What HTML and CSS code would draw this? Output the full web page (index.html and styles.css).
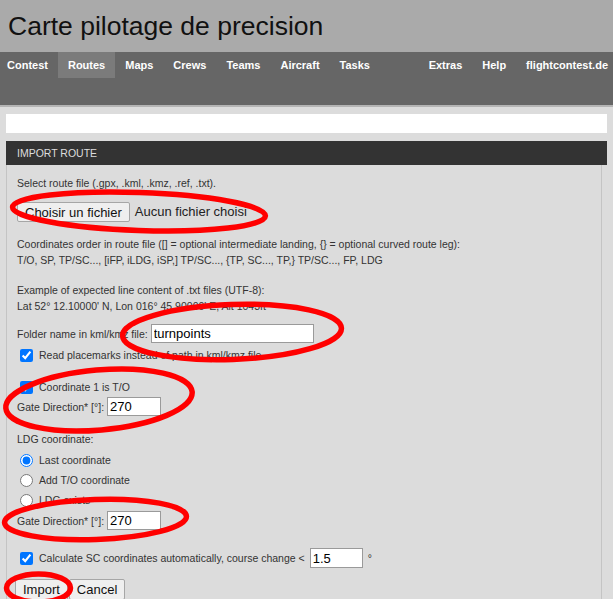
FILE: index.html
```html
<!DOCTYPE html>
<html lang="fr">
<head>
    <meta charset="UTF-8">
    <meta name="viewport" content="width=device-width, initial-scale=1.0">
    <title>Carte pilotage de precision</title>
    <link rel="stylesheet" href="styles.css">
</head>
<body>
    <header class="title">Carte pilotage de precision</header>

    <nav class="menu">
        <a href="#">Contest</a>
        <a href="#" class="active">Routes</a>
        <a href="#">Maps</a>
        <a href="#">Crews</a>
        <a href="#">Teams</a>
        <a href="#">Aircraft</a>
        <a href="#">Tasks</a>
        <a href="#" class="push">Extras</a>
        <a href="#">Help</a>
        <a href="#" class="last">flightcontest.de</a>
    </nav>

    <main class="content">
        <div class="message"></div>

        <form class="box">
            <div class="box-head">IMPORT ROUTE</div>
            <div class="box-body">
                <p class="text">Select route file (.gpx, .kml, .kmz, .ref, .txt).</p>
                <div class="file-row">
                    <button type="button" class="btn file-btn">Choisir un fichier</button>
                    <span class="file-name">Aucun fichier choisi</span>
                </div>

                <p class="text gap">Coordinates order in route file ([] = optional intermediate landing, {} = optional curved route leg):<br>T/O, SP, TP/SC..., [iFP, iLDG, iSP,] TP/SC..., {TP, SC..., TP,} TP/SC..., FP, LDG</p>
                <p class="text gap">Example of expected line content of .txt files (UTF-8):<br>Lat 52° 12.10000' N, Lon 016° 45.90000' E, Alt 1043ft</p>

                <div class="field folder">
                    <label>Folder name in kml/kmz file:</label>
                    <input type="text" class="input wide" value="turnpoints">
                </div>
                <label class="check placemarks"><input type="checkbox" checked>Read placemarks instead of path in kml/kmz file</label>

                <label class="check first-coord"><input type="checkbox" checked>Coordinate 1 is T/O</label>
                <div class="field gate">
                    <label>Gate Direction* [°]:</label>
                    <input type="text" class="input short" value="270">
                </div>

                <p class="text ldg">LDG coordinate:</p>
                <label class="check radio first-radio"><input type="radio" name="ldg" checked>Last coordinate</label>
                <label class="check radio"><input type="radio" name="ldg">Add T/O coordinate</label>
                <label class="check radio"><input type="radio" name="ldg">LDG exists</label>
                <div class="field gate-ldg">
                    <label>Gate Direction* [°]:</label>
                    <input type="text" class="input short" value="270">
                </div>

                <div class="check calc">
                    <input type="checkbox" checked>
                    <span>Calculate SC coordinates automatically, course change &lt;</span>
                    <input type="text" class="input short" value="1.5">
                    <span class="deg">°</span>
                </div>

                <div class="buttons">
                    <button type="button" class="btn">Import</button>
                    <button type="button" class="btn">Cancel</button>
                </div>
            </div>
        </form>
    </main>

    <!-- red hand-drawn marks over the screenshot -->
    <svg class="marks" width="613" height="599" viewBox="0 0 613 599">
        <ellipse cx="139" cy="211.5" rx="126.5" ry="19" transform="rotate(2 139 211.5)"/>
        <ellipse cx="232" cy="332" rx="109.5" ry="27.5" transform="rotate(-2 232 332)"/>
        <ellipse cx="99" cy="400" rx="93.5" ry="30" transform="rotate(-5 99 400)"/>
        <ellipse cx="95.5" cy="519.5" rx="91" ry="20" transform="rotate(-2 95.5 519.5)"/>
        <ellipse cx="38.5" cy="588" rx="32" ry="14"/>
    </svg>
</body>
</html>
```

FILE: styles.css
```css
/* Global Styles */
body {
    font-family: 'Liberation Sans', Arial, sans-serif;
    margin: 0;
    padding: 0;
    background: #dcdcdc;
    color: #333;
    position: relative;
    overflow: hidden;
}

.title {
    height: 52px;
    padding-left: 8px;
    background: #aaa;
    color: #111;
    font-size: 26.5px;
    line-height: 52px;
}

.menu {
    display: flex;
    align-items: flex-start;
    height: 53px;
    background: #666;
    border-bottom: 2px solid #b4b4b4;
}

.menu a {
    padding: 0 10px;
    color: #fff;
    font-size: 11px;
    font-weight: bold;
    line-height: 26px;
    text-decoration: none;
}

.menu a:first-child {
    padding-left: 7px;
}

.menu a.active {
    background: #7b7b7b;
}

.menu a.push {
    margin-left: auto;
}

.menu a.last {
    padding-right: 5px;
}

.content {
    padding: 7px 6px 0;
}

.message {
    height: 19px;
    background: #fff;
}

.box {
    margin: 8px 0 0;
}

.box-head {
    height: 24px;
    padding-left: 11px;
    background: #333;
    color: #ddd;
    font-size: 10.5px;
    line-height: 24px;
}

.box-body {
    padding: 10px 10px 20px;
    border-left: 1px solid #c4c4c4;
    border-right: 1px solid #c4c4c4;
    margin-right: 5px;
    font-size: 10.5px;
    line-height: 16px;
}

.text {
    margin: 0;
}

.text.gap {
    margin-top: 14px;
}

.text.ldg {
    margin-top: 15px;
}

.btn {
    height: 21px;
    padding: 0 7px;
    border: 1px solid #a6a6a6;
    border-radius: 2px;
    background: #efefef;
    color: #111;
    font-family: 'Liberation Sans', Arial, sans-serif;
    font-size: 13px;
}

.file-row {
    display: flex;
    align-items: center;
    gap: 5px;
    height: 20px;
    margin-top: 11px;
}

.file-btn {
    height: 20px;
    padding: 0 7px;
}

.file-name {
    color: #222;
    font-size: 13px;
}

.field {
    display: flex;
    align-items: center;
    gap: 3px;
    height: 19px;
}

.field.folder {
    margin-top: 10px;
}

.field.gate {
    margin-top: 2px;
}

.field.gate-ldg {
    margin-top: 3px;
}

.input {
    box-sizing: border-box;
    height: 19px;
    padding: 0 2px;
    border: 1px solid #9a9a9a;
    background: #fff;
    color: #000;
    font-family: 'Liberation Sans', Arial, sans-serif;
    font-size: 13px;
}

.input.wide {
    width: 163px;
}

.input.short {
    width: 54px;
}

.check {
    display: flex;
    align-items: center;
    height: 16px;
}

.check input[type="checkbox"],
.check input[type="radio"] {
    width: 13px;
    height: 13px;
    margin: 0 6px 0 3px;
}

.check.placemarks {
    margin-top: 4px;
}

.check.first-coord {
    margin-top: 16px;
}

.check.radio {
    margin-top: 4px;
}

.check.first-radio {
    margin-top: 5px;
}

.check.calc {
    height: 20px;
    margin-top: 18px;
}

.check.calc .input {
    width: 53px;
    height: 20px;
    margin-left: 5px;
}

.check.calc .deg {
    margin-left: 5px;
}

.buttons {
    display: flex;
    gap: 1px;
    margin: 11px 0 0 -2px;
}

.marks {
    position: absolute;
    top: 0;
    left: 0;
    pointer-events: none;
}

.marks ellipse {
    fill: none;
    stroke: #f00;
    stroke-width: 5.5;
}
```
